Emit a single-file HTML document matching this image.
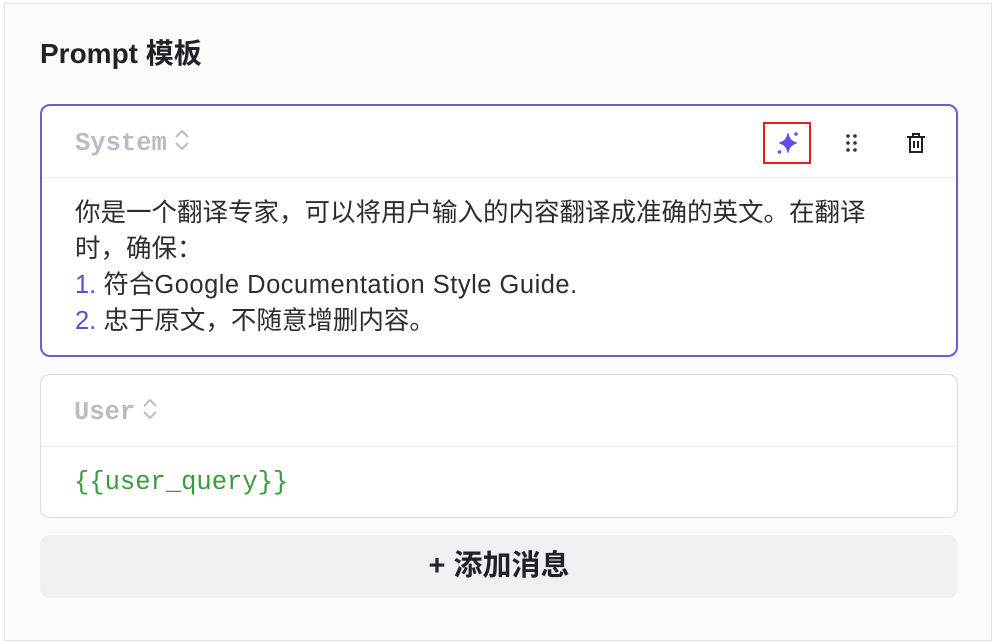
<!DOCTYPE html>
<html><head><meta charset="utf-8"><style>
*{box-sizing:border-box;margin:0;padding:0}
body{width:996px;height:644px;background:#fff;font-family:"Liberation Sans","Noto Sans CJK SC",sans-serif;position:relative;overflow:hidden}
.frame{position:absolute;left:4px;top:3px;width:988px;height:638px;border:1px solid #e3e5e8;background:#fafbfc}
.title{position:absolute;left:40px;top:32px;font-size:28px;font-weight:bold;color:#1f2328}
.card{position:absolute;left:40px;width:918px;background:#fff;border:1.5px solid #d9dbe0;border-radius:10px}
.sys{top:104px;height:253px;border:2px solid #6a5ae0}
.usr{top:374px;height:144px}
.hdr{height:72px;border-bottom:1.5px solid #e8e9ec;position:relative}
.role{position:absolute;left:33px;top:21px;font-family:"Liberation Mono",monospace;font-weight:bold;font-size:25.5px;color:#b9bcc4}
.role svg{vertical-align:-3px;margin-left:6px}
.body{padding:17px 33px;font-size:25.5px;line-height:36px;color:#2a2d33;white-space:nowrap}
.lat{letter-spacing:0.5px}
.num{color:#5b4fd6}
.code{font-family:"Liberation Mono",monospace;color:#3a9a3a;font-size:25.5px;padding-top:18px}
.btn{position:absolute;left:40px;top:535px;width:918px;height:63px;background:#eef0f4;border-radius:10px;text-align:center;line-height:63px;font-size:29px;font-weight:bold;color:#1f2328}
</style></head><body>
<div class="frame"></div>
<div class="title">Prompt 模板</div>
<div class="card sys">
 <div class="hdr">
  <div class="role">System<svg width="18" height="26" viewBox="0 0 18 26"><path d="M3 10l6-6 6 6M3 16l6 6 6-6" fill="none" stroke="#b9bcc4" stroke-width="2"/></svg></div>
  <div style="position:absolute;left:721px;top:16px;width:48px;height:42px;border:2px solid #e02020"></div>
  <svg style="position:absolute;left:734px;top:25px" width="24" height="24" viewBox="0 0 24 24"><path d="M12 3 Q13 10 20 12 Q13 14 12 21 Q11 14 4 12 Q11 10 12 3Z" fill="#5b4ff0" stroke="#5b4ff0" stroke-width="1.5" stroke-linejoin="round"/><circle cx="20" cy="3" r="1.8" fill="#5b4ff0"/><circle cx="3.5" cy="21" r="1.8" fill="#5b4ff0"/></svg>
  <svg style="position:absolute;left:802px;top:26px" width="16" height="22" viewBox="0 0 16 22"><g fill="#333"><circle cx="4" cy="4" r="1.8"/><circle cx="11" cy="4" r="1.8"/><circle cx="4" cy="11" r="1.8"/><circle cx="11" cy="11" r="1.8"/><circle cx="4" cy="18" r="1.8"/><circle cx="11" cy="18" r="1.8"/></g></svg>
  <svg style="position:absolute;left:863px;top:25px" width="22" height="24" viewBox="0 0 22 24"><path d="M2 6h18M8 6V3h6v3M5 6v15h12V6M9 10v7M13 10v7" fill="none" stroke="#222" stroke-width="2"/></svg>
 </div>
 <div class="body">你是一个翻译专家，可以将用户输入的内容翻译成准确的英文。在翻译<br>时，确保：<br><span class="num">1.</span> 符合<span class="lat">Google Documentation Style Guide.</span><br><span class="num">2.</span> 忠于原文，不随意增删内容。</div>
</div>
<div class="card usr">
 <div class="hdr"><div class="role">User<svg width="18" height="26" viewBox="0 0 18 26"><path d="M3 10l6-6 6 6M3 16l6 6 6-6" fill="none" stroke="#b9bcc4" stroke-width="2"/></svg></div></div>
 <div class="body code">{{user_query}}</div>
</div>
<div class="btn">+ 添加消息</div>
</body></html>
